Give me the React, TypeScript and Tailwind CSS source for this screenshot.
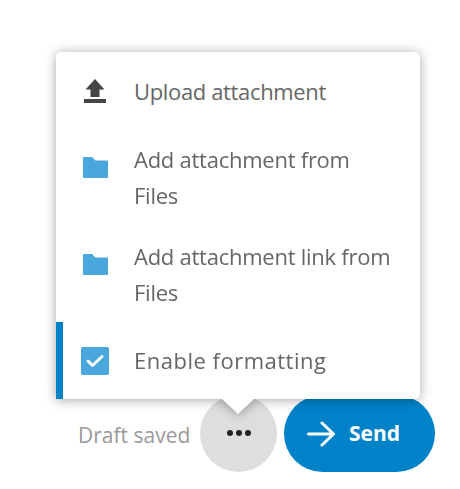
import React from 'react';

const FolderIcon: React.FC = () => (
	<svg width="25" height="21" viewBox="0 0 25 21" className="block">
		<path d="M1 0h8l3.500 3.500H24a1 1 0 0 1 1 1V20a1 1 0 0 1-1 1H1a1 1 0 0 1-1-1V1a1 1 0 0 1 1-1z" fill="#49a7dc"/>
	</svg>
);

const UploadIcon: React.FC = () => (
	<svg width="22" height="24" viewBox="0 0 22 24" className="block">
		<path d="M11 0 20.500 10.500h-5V18h-9V10.500h-5z" fill="#454545"/>
		<rect x="0" y="20" width="22" height="4" fill="#454545"/>
	</svg>
);

const CheckboxIcon: React.FC = () => (
	<div className="w-[28px] h-[28px] rounded-[2px] bg-[#49a7dc] flex items-center justify-center">
		<svg width="18" height="14" viewBox="0 0 18 14">
			<path d="M2 7l4.500 4.500L16 2.500" fill="none" stroke="#fff" strokeWidth="3" strokeLinecap="round" strokeLinejoin="round"/>
		</svg>
	</div>
);

type MenuItemProps = {
	icon: React.ReactNode;
	className: string;
	textClassName: string;
	active?: boolean;
	children: React.ReactNode;
};

const MenuItem: React.FC<MenuItemProps> = ({icon, className, textClassName, active, children}) => (
	<div className={`flex border-l-[7px] ${active ? 'border-[#0082c9]' : 'border-transparent'} ${className}`}>
		<div className="w-[71px] shrink-0 flex justify-center pr-[7px]">{icon}</div>
		<div className={`text-[22px] leading-[36px] text-[#666666] pr-[25px] ${textClassName}`}>{children}</div>
	</div>
);

export default function App() {
	return (
		<div className="relative w-[460px] h-[489px] bg-white overflow-hidden font-['Open_Sans',sans-serif]">
			<div className="flex items-center pt-[395px] pl-[78px]">
				<span className="text-[21px] text-[#999999] w-[122px] whitespace-nowrap pt-[4px]">Draft saved</span>
				<div className="w-[77px] h-[77px] rounded-full bg-[#dedede] flex items-center justify-center gap-[3px] pb-[1px]">
					<span className="w-[6px] h-[6px] rounded-full bg-[#222222]"/>
					<span className="w-[6px] h-[6px] rounded-full bg-[#222222]"/>
					<span className="w-[6px] h-[6px] rounded-full bg-[#222222]"/>
				</div>
				<button className="ml-[7px] w-[151px] h-[77px] rounded-full bg-[#0082c9] flex items-center text-white pl-[23px]">
					<svg width="28" height="26" viewBox="0 0 28 26" className="block">
						<path d="M1.500 13H26.500M15 2l11.500 11L15 24" fill="none" stroke="#fff" strokeWidth="3" strokeLinecap="round" strokeLinejoin="round"/>
					</svg>
					<span className="ml-[14px] text-[21px] font-bold">Send</span>
				</button>
			</div>
			<div className="absolute left-[56px] top-[52px] w-[364px] drop-shadow-[0_1px_6px_rgba(0,0,0,0.35)]">
				<div className="bg-white rounded-[5px] rounded-bl-none overflow-hidden">
					<MenuItem className="h-[76px] pt-[21px]" textClassName="tracking-[-0.35px]" icon={<div className="pt-[6px]"><UploadIcon/></div>}>
						Upload attachment
					</MenuItem>
					<MenuItem className="h-[97px] pt-[13px]" textClassName="tracking-[-0.25px]" icon={<div className="pt-[16px]"><FolderIcon/></div>}>
						Add attachment from Files
					</MenuItem>
					<MenuItem className="h-[97px] pt-[13px]" textClassName="tracking-[-0.25px]" icon={<div className="pt-[16px]"><FolderIcon/></div>}>
						Add attachment link from Files
					</MenuItem>
					<MenuItem className="h-[77px] items-center pb-[1px]" textClassName="tracking-[0.5px]" active icon={<div className="pt-[2px]"><CheckboxIcon/></div>}>
						Enable formatting
					</MenuItem>
				</div>
				<div className="absolute left-[166px] bottom-[-15px] w-0 h-0 border-x-[16px] border-x-transparent border-t-[15px] border-t-white"/>
			</div>
		</div>
	);
}
